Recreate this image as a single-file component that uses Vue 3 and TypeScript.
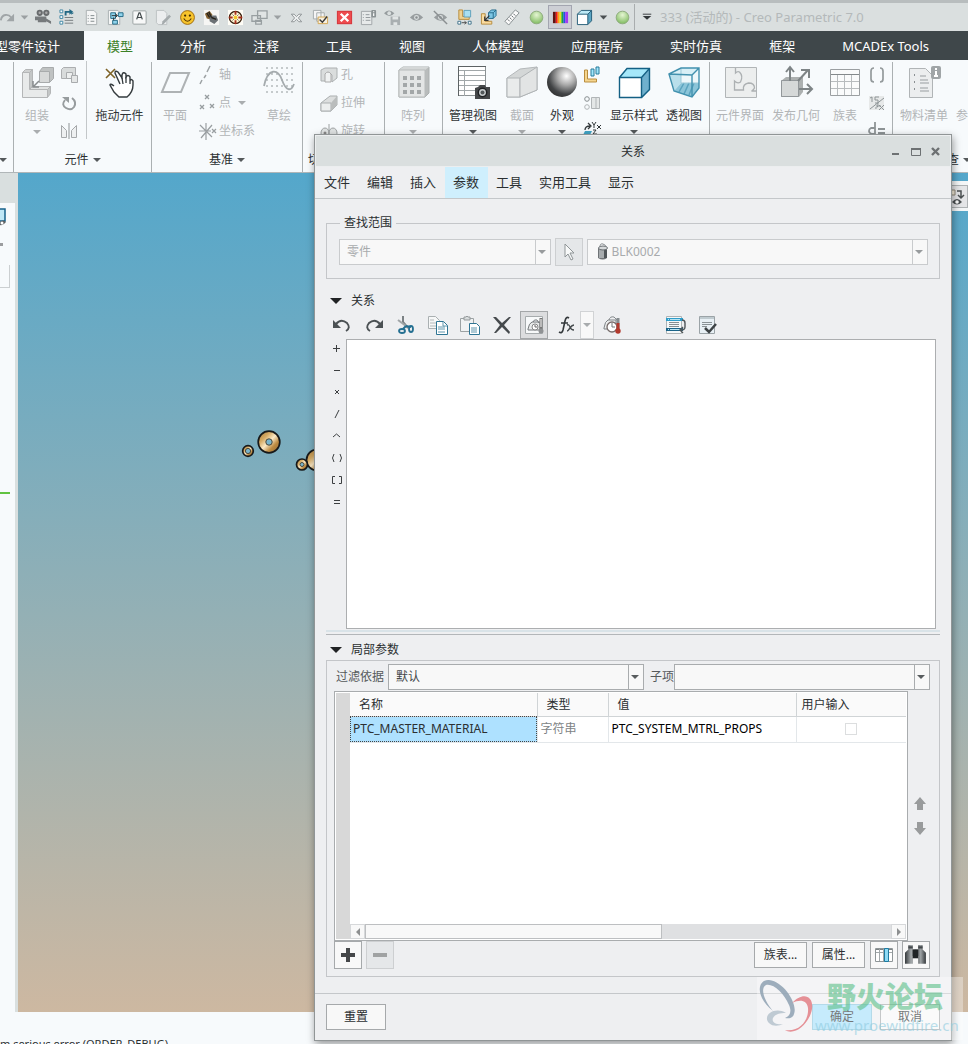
<script setup lang="ts">
import { ref } from 'vue'

interface Quick { icon: string; label: string; kind?: string }
interface Tool { label: string; icon: string; size?: string; off?: boolean; arrow?: boolean }
interface Column { kind: string; tools: Tool[] }
interface Group { id: string; label: string; columns: Column[] }

const quick: Quick[] = [
  { icon: 'redoGrey', label: '重做' },
  { icon: 'down', label: '重做列表', kind: 'drop dim' },
  { icon: 'camera', label: '录像' },
  { icon: 'regen', label: '重新生成' },
  { icon: 'sheet', label: '报告' },
  { icon: 'tree', label: '模型树' },
  { icon: 'letter', label: '注解' },
  { icon: 'sheetPen', label: '编辑' },
  { icon: 'smile', label: '表情' },
  { icon: 'motor', label: '电机' },
  { icon: 'target', label: '目标' },
  { icon: 'windows', label: '窗口' },
  { icon: 'down', label: '窗口列表', kind: 'drop dim' },
  { icon: 'closeGrey', label: '关闭' },
  { icon: 'sheetCheck', label: '检查' },
  { icon: 'redX', label: '拭除' },
  { icon: 'sheetInfo', label: '信息' },
  { icon: 'eyeSave', label: '保存状况' },
  { icon: 'eye', label: '显示' },
  { icon: 'eyeOff', label: '隐藏' },
  { icon: 'assembleA', label: '放置' },
  { icon: 'assembleB', label: '组装' },
  { icon: 'ruler', label: '测量' },
  { icon: 'ball', label: '状况' },
  { icon: 'rainbow', label: '颜色', kind: 'pressed' },
  { icon: 'cubeSmall', label: '显示样式' },
  { icon: 'down', label: '样式列表', kind: 'drop' },
  { icon: 'ball', label: '再生状况' }
]

const tabs = ['分析', '注释', '工具', '视图', '人体模型', '应用程序', '实时仿真', '框架', 'MCADEx Tools']

const groups: Group[] = [
  { id: 'g-edge', label: '', columns: [] },
  {
    id: 'g-part', label: '元件', columns: [
      { kind: 'big w46', tools: [{ label: '组装', icon: 'assemble', off: true, arrow: true }] },
      { kind: 'small w26 ruled', tools: [
        { label: '', icon: 'create', off: true }, { label: '', icon: 'repeat', off: true }, { label: '', icon: 'mirror', off: true }] },
      { kind: 'big w64', tools: [{ label: '拖动元件', icon: 'hand' }] }
    ]
  },
  {
    id: 'g-datum', label: '基准', columns: [
      { kind: 'big w46', tools: [{ label: '平面', icon: 'plane', off: true }] },
      { kind: 'small w58', tools: [
        { label: '轴', icon: 'axis', off: true }, { label: '点', icon: 'points', off: true, arrow: true }, { label: '坐标系', icon: 'csys', off: true }] },
      { kind: 'big w46', tools: [{ label: '草绘', icon: 'sketch', off: true }] }
    ]
  },
  {
    id: 'g-cut', label: '切口和曲面', columns: [
      { kind: 'small w64 inset', tools: [
        { label: '孔', icon: 'hole', off: true }, { label: '拉伸', icon: 'extrude', off: true }, { label: '旋转', icon: 'revolve', off: true }] }
    ]
  },
  { id: 'g-pattern', label: '修饰符', columns: [{ kind: 'big w56', tools: [{ label: '阵列', icon: 'pattern', off: true, arrow: true }] }] },
  {
    id: 'g-display', label: '模型显示', columns: [
      { kind: 'big w60', tools: [{ label: '管理视图', icon: 'viewManager', arrow: true }] },
      { kind: 'big w38', tools: [{ label: '截面', icon: 'section', off: true, arrow: true }] },
      { kind: 'big w42', tools: [{ label: '外观', icon: 'sphere', arrow: true }] },
      { kind: 'small w22', tools: [
        { label: '', icon: 'explode' }, { label: '', icon: 'toggleView', off: true }, { label: '', icon: 'orient' }] },
      { kind: 'big w56', tools: [{ label: '显示样式', icon: 'cube', arrow: true }] },
      { kind: 'big w44', tools: [{ label: '透视图', icon: 'perspective' }] }
    ]
  },
  {
    id: 'g-intent', label: '模型意图', columns: [
      { kind: 'big w60', tools: [{ label: '元件界面', icon: 'puzzle', off: true }] },
      { kind: 'big w52', tools: [{ label: '发布几何', icon: 'publish', off: true }] },
      { kind: 'big w46', tools: [{ label: '族表', icon: 'family', off: true }] },
      { kind: 'small w22', tools: [
        { label: '', icon: 'brackets', off: true }, { label: '', icon: 'switchDim', off: true }, { label: '', icon: 'dEquals', off: true }] }
    ]
  },
  {
    id: 'g-check', label: '调查', columns: [
      { kind: 'big w62', tools: [{ label: '物料清单', icon: 'bom', off: true }] },
      { kind: 'big w62', tools: [{ label: '参考查看器', icon: 'refViewer', off: true }] }
    ]
  }
]

const menus = ['文件', '编辑', '插入', '参数', '工具', '实用工具', '显示']
const activeMenu = ref('参数')

const editTools: Quick[] = [
  { icon: 'undo', label: '撤消' },
  { icon: 'redo', label: '重做' },
  { icon: 'cut', label: '剪切' },
  { icon: 'copy', label: '复制' },
  { icon: 'paste', label: '粘贴' },
  { icon: 'remove', label: '删除' },
  { icon: 'units', label: '单位', kind: 'on' },
  { icon: 'fx', label: '函数', kind: 'joined' },
  { icon: 'down', label: '函数列表', kind: 'split' },
  { icon: 'unitsRed', label: '校验单位' },
  { icon: 'sortRel', label: '排序关系', kind: 'apart' },
  { icon: 'verify', label: '校验关系' }
]

const operators = ['plus', 'minus', 'times', 'slash', 'caret', 'round', 'square', 'equals']
const relations = ref('')
const rows = [{ name: 'PTC_MASTER_MATERIAL', type: '字符串', value: 'PTC_SYSTEM_MTRL_PROPS' }]

const sheet = '<path d="M3.500 1.500h8l3 3v12h-11z" fill="#f4f5f5" stroke="#a9afb1"/>'
const eyeShape = '<path d="M2 9q7-8 14 0q-7 7-14 0z" fill="#989d9f"/><circle cx="9" cy="9" r="2.600" fill="#dadfdf"/><circle cx="9" cy="9" r="1.300" fill="#898e90"/>'
const cube3 = '<path d="M1 11L8 3H32L24 11z" fill="#a5e8fa"/><path d="M24 11L32 3V24L24 32z" fill="#6fb0cd"/><path d="M1 11h23v20H1z" fill="#fff"/><path d="M1.500 11.500h22v20h-22zL9 2.500h22.500v21l-8 8M23.500 11.500l8-9" fill="none" stroke="#146084" stroke-width="1.400"/>'

const art: Record<string, string> = {
  down: '<path d="M5 7h8l-4 4z" fill="currentColor"/>',
  redoGrey: '<path d="M3 12C4 5 11 5 14 9" fill="none" stroke="#a0a5a7" stroke-width="2"/><path d="M17 5v8H9z" fill="#a0a5a7"/>',
  camera: '<circle cx="5" cy="4" r="3.300" fill="#686b6d"/><circle cx="12" cy="4" r="3.300" fill="#686b6d"/><circle cx="5" cy="4" r="1.300" fill="#aaa"/><circle cx="12" cy="4" r="1.300" fill="#aaa"/><path d="M3 8h9v6H3zM0 8h3v4H0zM12 10l5 3v3l-5-3z" fill="#767a7c"/>',
  regen: '<path d="M1 1h3v3H1zM1 7h3v3H1zM1 13h3v3H1z" fill="#fff" stroke="#3c86a4"/><path d="M6 9h9M6 12h9M6 15h9" stroke="#747a7c"/><path d="M7 7V3h5" fill="none" stroke="#236985" stroke-width="2"/><path d="M11 0l4 3-4 3zM13 6V4h3" fill="#236985"/>',
  sheet: sheet + '<path d="M5 7h1M5 10h1M5 13h1M8 7h4M8 10h4M8 13h4" stroke="#81898b"/>',
  tree: '<path d="M1.500 1.500h10l2 2v13h-12z" fill="#f4f5f5" stroke="#a9afb1"/><path d="M4 4h5v6H4zM12 4h5v4h-5zM6 12h5v4H6z" fill="#8fd3ec" stroke="#236985"/><path d="M5 7h6M7 9v3M9 5l2 2-2 2" fill="none" stroke="#333"/>',
  letter: '<rect x="2" y="2" width="14" height="14" rx="1" fill="#f7f8f8" stroke="#9aa1a3"/><path d="M6 11L8.500 4h1L12 11M7 9h4" fill="none" stroke="#424a4c" stroke-width="1.300"/>',
  sheetPen: '<path d="M1.500 1.500h8l3 3v12h-9l-2-2z" fill="#eceeef" stroke="#bcc1c2"/><path d="M8 13l7-7 2 2-7 7-3 2z" fill="#a5abad"/>',
  smile: '<circle cx="9" cy="9" r="7.300" fill="#f7c42c" stroke="#9a6810"/><circle cx="6.500" cy="7" r="1.200" fill="#402b04"/><circle cx="11.500" cy="7" r="1.200" fill="#402b04"/><path d="M5 10q4 6 8 0" fill="none" stroke="#553807" stroke-width="1.200"/>',
  motor: '<path d="M1 1h16v16H1z" fill="#f6f6f4"/><path d="M2 5l5-3 3 4-2 5-4-1z" fill="#836131"/><path d="M7 7l7 0 2 5-4 4-5-3z" fill="#6c7175"/><path d="M4 4l3 5M6 3l3 6M9 9l5 2" stroke="#27231c" stroke-width="1.500"/>',
  target: '<path d="M1 1h16v16H1z" fill="#fffdf6"/><circle cx="9" cy="9" r="6.500" fill="#fff7d5" stroke="#38200e" stroke-width="1.400"/><path d="M9 2v4M9 12v4M2 9h4M12 9h4" stroke="#a72f1c" stroke-width="2"/><circle cx="9" cy="9" r="2" fill="#f0c52c"/><path d="M6 6l1 1M12 6l-1 1M6 12l1-1M12 12l-1-1" stroke="#262626"/>',
  windows: '<path d="M7 2h10v8H7zM1 7h9v6H1zM5 12h6v4H5z" fill="#e0e4e4" stroke="#989fa1" stroke-width="1.400"/>',
  closeGrey: '<path d="M3.500 5.500h3l2.500 2.500 2.500-2.500h3L11 9.500l3.500 4h-3L9 11l-2.500 2.500h-3L7 9.500z" fill="#eef0f0" stroke="#8e9496"/>',
  sheetCheck: '<path d="M1.500 1.500h8v9h-8zM5 4h8v9H5z" fill="#f5f5f5" stroke="#a4aaac"/><path d="M6.500 8.500h10v7h-10z" fill="#f7f0df" stroke="#d5a650"/><path d="M8 11l3 3 5-6" fill="none" stroke="#3b3b3b" stroke-width="1.500"/>',
  redX: '<rect x="1" y="2" width="16" height="14" fill="#ee4b4e"/><path d="M5 5l8 8M13 5l-8 8" stroke="#fff" stroke-width="2.500"/><rect x="1.500" y="2.500" width="15" height="13" fill="none" stroke="#d53a3f"/>',
  sheetInfo: '<path d="M1.500 2.500h11v14h-11z" fill="#e7eaea" stroke="#a0a6a8"/><path d="M3 6h1M3 9h1M3 12h1M6 6h4M6 9h5M6 12h5" stroke="#90979a"/><rect x="12" y="1" width="5" height="8" rx="1" fill="#8c9395"/><path d="M14.500 2.500v1M14.500 4.500v3" stroke="#fff" stroke-width="1.300"/>',
  eyeSave: '<path d="M0 4.500q5-6 11 0q-5 6-11 0z" fill="#969c9e"/><circle cx="5.500" cy="4.500" r="2" fill="#dadfdf"/><path d="M7 8h10v9H7z" fill="#a9afb1"/><path d="M9 8h6v3H9zM10 14h4v3h-4z" fill="#e2e6e6"/>',
  eye: eyeShape,
  eyeOff: eyeShape + '<path d="M2 2l14 14" stroke="#8a8f91" stroke-width="1.500"/>',
  assembleA: '<path d="M3 1v10h11V8H7V1z" fill="#f0d18f" stroke="#b68b3d"/><path d="M8.500 1.500h7v7h-7z" fill="#a9dff1" stroke="#5c9fb9"/><path d="M2 13h3v3H2zM13 13h3v3h-3z" fill="#fff" stroke="#3b7088"/><path d="M6 14.500h5M9 13l2 1.500L9 16" fill="none" stroke="#4a4a4a"/>',
  assembleB: '<path d="M1.500 5v11h11v-3h-7V5z" fill="#f9dba1" stroke="#b68b3d"/><path d="M9 4l3-3h5v6l-3 3H9z" fill="#7dc6e4" stroke="#266b8b"/><path d="M9 4h5v6M14 4l3-3" fill="none" stroke="#266b8b"/><path d="M10 7l-5 5M5 8v4h4" fill="none" stroke="#343434" stroke-width="1.300"/>',
  ruler: '<path d="M1 13L12 1l4 3L5 17z" fill="#fafafa" stroke="#858c8e"/><path d="M6 13l-2-2M8 11L6 9M10 9L8 7M12 7l-2-2" stroke="#60676a"/>',
  ball: '<circle cx="9" cy="9" r="6.700" fill="url(#green)" stroke="#8daa7d"/>',
  rainbow: '<path d="M1 3h3v12H1z" fill="#5f1212"/><path d="M4 3h2v12H4z" fill="#f01818"/><path d="M6 3h2v12H6z" fill="#ff9c12"/><path d="M8 3h2v12H8z" fill="#e9e51a"/><path d="M10 3h2v12h-2z" fill="#19a540"/><path d="M12 3h2v12h-2z" fill="#2258dd"/><path d="M14 3h3v12h-3z" fill="#a23bf0"/>',
  cubeSmall: '<path d="M1.500 5.500h11v11h-11z" fill="#fff"/><path d="M1.500 5.500l4-4h11l-4 4z" fill="#bdeaf6"/><path d="M12.500 5.500l4-4v11l-4 4z" fill="#5ba5c2"/><path d="M1.500 5.500h11v11h-11zl4-4h11v11l-4 4M12.500 5.500l4-4" fill="none" stroke="#235b76"/>',
  assemble: '<path d="M1.500 6.500l3-3h7l-3 3z" fill="#cfd1d1" stroke="#b4b6b7"/><path d="M8.500 6.500l3-3v16l-3 4z" fill="#c3c6c6" stroke="#b4b6b7"/><path d="M8.500 23.500l3-3h18l-3 3z" fill="#dfe1e1" stroke="#b4b6b7"/><path d="M26.500 23.500l3-3v7l-3 4z" fill="#c3c6c6" stroke="#b4b6b7"/><path d="M1.500 6.500h7v17h18v8h-25z" fill="#e8eaea" stroke="#b4b6b7"/><path d="M18.500 5.500l3-4h11v11l-4 4h-10z" fill="#bfc2c2" stroke="#a8abac"/><path d="M18.500 5.500h10v11h-10z" fill="#d7d9d9" stroke="#a8abac"/><path d="M18 15l-6 6M12 15v6h6" fill="none" stroke="#888c8e" stroke-width="1.500"/>',
  create: '<path d="M1.500 3.500l2-2h12v9l-2 2h-12z" fill="#d8dbdb" stroke="#acaeb0"/><path d="M6.500 6.500h6v6h-6z" fill="#eceeee" stroke="#a8abad"/><path d="M11.500 9.500h6v7h-6z" fill="#e4e6e6" stroke="#a8abad"/>',
  repeat: '<path d="M5 6q-4 5 1 8 5 3 8-1 3-5-2-9" fill="none" stroke="#979c9e" stroke-width="2"/><path d="M2 3h7v6z" fill="#979c9e"/>',
  mirror: '<path d="M1.500 3.500l5 5v7h-5zM16.500 3.500l-5 5v7h5z" fill="#eef0f1" stroke="#a5a8aa"/><path d="M9 1v16" stroke="#8f9496"/>',
  hand: '<path d="M3 3l9 9M12 3l-9 9" stroke="#7d6226" stroke-width="1.600"/><path d="M11 20q-4-3-4-1l4 7 5 5h8q6-5 6-12v-4q-2-3-3 0v-4q-2-3-4 0v-3q-3-3-4 1v3l-4-6q-3-2-3 1l5 11" fill="#fff" stroke="#353b3e" stroke-width="1.400"/><path d="M19 12l1 6M23 11v6M27 15v3" stroke="#353b3e" stroke-width="1.300"/>',
  plane: '<path d="M3 26L11 7h19L22 26z" fill="#f7fafc" stroke="#aeb2b4" stroke-width="2"/>',
  axis: '<path d="M12 0L9 6M8 9l-2 3M4 14l-2 4" stroke="#9da2a4" stroke-width="1.500"/>',
  points: '<path d="M7 1l4 4M11 1L7 5M2 11l4 4M6 11l-4 4M12 10l4 4M16 10l-4 4" stroke="#979da0" stroke-width="1.300"/>',
  csys: '<path d="M1 9h12M8 1v17M2 3l12 12M14 3L3 16M14 7l4 4M18 7l-4 4" stroke="#999ea1" stroke-width="1.200"/>',
  sketch: '<path d="M3 2h28M3 8h28M3 14h28M3 20h28M3 26h28" stroke="#c5cacc" stroke-width="2" stroke-dasharray="2 3"/><path d="M1 20C5 1 15 3 19 14s9 12 12 4" fill="none" stroke="#a5abae" stroke-width="1.800"/>',
  hole: '<path d="M1 4l4-2h12v10l-5 4V9q-4-5-6 0v6H1z" fill="#dadddd" stroke="#acb0b1"/><path d="M5 16V8q3-4 6 0v8z" fill="#f0f2f2" stroke="#aaa"/>',
  extrude: '<path d="M1 9l9-7h7v9l-6 6H1z" fill="#dcdede" stroke="#abafb0"/><path d="M1 9h10v8H1z" fill="#eceeee" stroke="#abafb0"/><path d="M11 9l6-7v9l-6 6z" fill="#babdbd"/>',
  revolve: '<ellipse cx="5" cy="11" rx="4" ry="5" fill="#dfe2e2" stroke="#9ca0a1"/><ellipse cx="13" cy="11" rx="4" ry="5" fill="#dfe2e2" stroke="#9ca0a1"/><path d="M9 2v14" stroke="#9ca0a1"/><circle cx="5" cy="11" r="1.500" fill="#888"/>',
  pattern: '<path d="M2 4l4-3h26v26l-4 4H2z" fill="#b9bcbc" stroke="#abb0b0"/><path d="M2 4l4-3h26l-4 3z" fill="#d4d7d7"/><path d="M2 4h26v27H2z" fill="#e3e5e5" stroke="#b8bbbb"/><path d="M6 10h4v4H6zM13 10h4v4h-4zM20 10h4v4h-4zM6 17h4v4H6zM13 17h4v4h-4zM20 17h4v4h-4zM6 24h4v4H6zM13 24h4v4h-4zM20 24h4v4h-4z" fill="#a3a7a8"/>',
  viewManager: '<path d="M1.500.500h27v29h-27z" fill="#fff" stroke="#8c9294"/><path d="M2 4.500h26M2 9.500h26M2 14.500h26M2 19.500h26M2 24.500h26M7.500 5v25" stroke="#a1a7a9"/><path d="M1.500 0v30M1 .500h28" stroke="#5d6264"/><path d="M18 22l3-1 2-2h5l1 2h4v12H18z" fill="#454749"/><circle cx="25.500" cy="26.500" r="4.200" fill="#c8ccce" stroke="#212325" stroke-width="1.500"/><circle cx="25.500" cy="26.500" r="2" fill="#54595b"/>',
  section: '<path d="M1 12L14 3l17-2v23l-17 7H1z" fill="#d4d7d7" stroke="#b4b8ba"/><path d="M1 12h13v19H1z" fill="#e9ebeb" stroke="#b0b4b6"/><path d="M14 12L31 1v23L14 31z" fill="#e2e4e4" stroke="#b0b4b6"/>',
  sphere: '<circle cx="16" cy="16" r="15" fill="url(#sphere)"/>',
  explode: '<path d="M1.500 4v12h12v-3h-9V4z" fill="#f5d58f" stroke="#b98d3e"/><path d="M8 3h3v7H8zM13 1h3v7h-3z" fill="#a1e6fb" stroke="#267a9b"/>',
  toggleView: '<circle cx="4" cy="5" r="2.300" fill="none" stroke="#888e90"/><circle cx="4" cy="13" r="2.300" fill="none" stroke="#b1b5b7"/><path d="M8.500 3.500h8v11h-8zM13 4v10" fill="#e4e7e7" stroke="#b1b5b7"/>',
  orient: '<path d="M2 8q0-4 5-4M5 1l3 3-3 3" fill="none" stroke="#33393b" stroke-width="1.300"/><path d="M9 0l2 3 2-3M11 3v3M14 3l4 4M18 3l-4 4M10 8h3l-3 4h4" fill="none" stroke="#33393b"/><path d="M2 9h7l-2 4H0z" fill="#41a4c5"/>',
  cube: cube3,
  perspective: '<path d="M1 8L13 2h18v15l-7 14-18-6z" fill="#eef7fa"/><path d="M1 8l12-6v15l-7 8z" fill="#b9dfeb"/><path d="M6 25l7-8h18v5l-7 9z" fill="#8cc5d9"/><path d="M11 26l5-9M16 28l5-11M21 29l5-12" stroke="#5ba3be" stroke-width="1.500"/><path d="M1 8l12-6h18l-7 7z" fill="#d8eff6"/><path d="M13 2v15h18" fill="none" stroke="#9cc9d8"/><path d="M1 8l12-6h18v20l-7 9-18-6zM1 8l23 1 7-7M24 9v22" fill="none" stroke="#4291ae" stroke-width="1.400"/>',
  puzzle: '<path d="M1.500 1.500h31v30h-31z" fill="#eceeee" stroke="#b1b5b7"/><path d="M11.500 2v5q2-2 4-1 4 4 1 10-3 2-6-1v9h9q-1-6 5-7 6 0 6 5-1 2-3 3h5" fill="none" stroke="#acb0b2" stroke-width="1.300"/>',
  publish: '<path d="M1 15l5-4h17v15l-4 5H1z" fill="#acb0b0"/><path d="M1.500 14.500h17v16h-17z" fill="#d5d8d8" stroke="#92979a"/><path d="M10 15V2M6 6l4-5 4 5M18 15L28 4M21 4h8v8M19 23h12M27 18l5 5-5 5" fill="none" stroke="#7e8486" stroke-width="2"/>',
  family: '<path d="M1.500 3.500h29v26h-29z" fill="#fafbfb" stroke="#9b9fa1"/><path d="M2 8.500h28" stroke="#84898b"/><path d="M2 15.500h28M2 22.500h28M8.500 9v20M15.500 9v20M22.500 9v20" stroke="#b8bcbe"/>',
  brackets: '<path d="M6 2Q3 2 3 5v8q0 3 3 3M12 2q3 0 3 3v8q0 3-3 3" fill="none" stroke="#949a9c" stroke-width="1.700"/>',
  switchDim: '<path d="M1 2h15v14H1z" fill="#e7e9e9"/><path d="M2 4l2-1v5M11 3H7v3h3v3H7M2 15L16 4M7 14q3 1 3-5M8 12h5M11 11l5 5M16 11l-5 5" fill="none" stroke="#8e9597"/>',
  dEquals: '<path d="M7 0v12M7 6H3q-2 1-2 3t3 3h3" fill="none" stroke="#8e9496" stroke-width="1.800"/><path d="M10 7h7M10 11h7" stroke="#8e9496" stroke-width="2"/>',
  bom: '<path d="M1.500 2.500h16l7 7v22h-23z" fill="#eceeef" stroke="#b0b4b6"/><path d="M6 9h1M6 16h1M6 23h1" stroke="#8a8f92" stroke-width="2"/><path d="M12 10h6M12 14h8M12 17h9M12 22h8M12 25h9" stroke="#989da0"/><rect x="23" y="0" width="10" height="13" rx="2" fill="#a0a5a7"/><path d="M28 2v2M28 5v5M26 10h4" stroke="#fff" stroke-width="2"/>',
  refViewer: '<path d="M3 28l5-6M4 22l4 4M9 28v2" stroke="#8f9597" stroke-width="2"/>',
  undo: '<path d="M3 8q5-6 11-1 4 5-1 8" fill="none" stroke="#4b5154" stroke-width="2"/><path d="M0 4v8h8z" fill="#4b5154"/>',
  redo: '<path d="M15 8Q10 2 4 7q-4 5 1 8" fill="none" stroke="#4b5154" stroke-width="2"/><path d="M18 4v8h-8z" fill="#4b5154"/>',
  cut: '<path d="M6 0v6l5 6" fill="none" stroke="#7b8184" stroke-width="2"/><path d="M1 4l8 6" stroke="#a0a5a7" stroke-width="2"/><path d="M9 10l-3 3M9 10l5 1" stroke="#246f91" stroke-width="2"/><ellipse cx="5" cy="15" rx="3" ry="2" fill="none" stroke="#246f91" stroke-width="1.800"/><ellipse cx="14" cy="13" rx="2" ry="3" fill="none" stroke="#246f91" stroke-width="1.800"/>',
  copy: '<path d="M-.500.500h7l4 4v8h-11z" fill="#f6f7f7" stroke="#aab0b2"/><path d="M1 4h4M1 7h7M1 10h7" stroke="#b4b9ba"/><path d="M7.500 5.500h7l4 4v9h-11z" fill="#fff" stroke="#2f7594"/><path d="M9 11h7M9 13h7M9 16h7M14 6v4h4" fill="none" stroke="#6097ae"/>',
  paste: '<path d="M-.500 2.500h13v13h-13z" fill="#f0f2f3" stroke="#9ca2a4"/><path d="M3 4V1h2l1-1 1 1h2v3z" fill="#d8dcdd" stroke="#94999b"/><path d="M8.500 7.500h7l3 3v8h-10z" fill="#fff" stroke="#2f7594"/><path d="M10 12h6M10 14h6M10 16h6" stroke="#6097ae"/>',
  remove: '<path d="M0 1h3l6 6 7-6h2l-7 8 6 7-1 2-7-7-6 6H1l6-8z" fill="#45494c"/>',
  units: '<path d="M.500 0.500h17v17H.500z" fill="#f7f9fa" stroke="#a6abad"/><path d="M3 13q1-6 4-7h8v8H3z" fill="#e8eaea" stroke="#75797c"/><path d="M8 6q1-3 4-2l2 3" fill="none" stroke="#75797c"/><circle cx="10" cy="11" r="3" fill="#fff" stroke="#888"/><path d="M10 9v2h2" fill="none" stroke="#666"/><path d="M16 2v12" stroke="#777" stroke-width="3"/><path d="M16 3v8" stroke="#fff"/><circle cx="16" cy="15" r="2.500" fill="#8f9294"/>',
  fx: '<path d="M12 2q-3-2-4 3L6 14q-1 4-4 2M4 7h7" fill="none" stroke="#33383b" stroke-width="1.600"/><path d="M10 9q2-1 3 2t4 3M17 9q-2 0-4 3t-3 3" fill="none" stroke="#44494c" stroke-width="1.400"/>',
  unitsRed: '<path d="M1 12Q2 5 5 4h8v9H1z" fill="#eceeee" stroke="#7e8386"/><path d="M6 4q1-4 5-3l3 3" fill="none" stroke="#83888b"/><circle cx="9" cy="11" r="5" fill="#fff" stroke="#776d6c" stroke-width="1.300"/><path d="M9 7v4h3" fill="none" stroke="#70787b"/><path d="M15 2v11" stroke="#858b8e" stroke-width="3"/><path d="M15 7v7" stroke="#b2392d" stroke-width="3"/><circle cx="15" cy="15" r="2.700" fill="#b2392d"/>',
  sortRel: '<path d="M.500.500h15v17H.500z" fill="#f5f8f9" stroke="#aeb4b6"/><path d="M0 2h17v3H0z" fill="#2f9dca"/><path d="M0 12h17v3H0z" fill="#1b6489"/><path d="M3 6.500h10M3 8.500h10M3 10.500h10" stroke="#878e91"/><path d="M2 3.500h1M4 3.500h10M2 13.500h1M4 13.500h10" stroke="#b8e3f1"/><path d="M16 4q3 0 3 3v4q0 3-4 3M17 11l-3 3 3 3" fill="none" stroke="#505659" stroke-width="1.400"/>',
  verify: '<path d="M1.500.500h15v17h-15z" fill="#e8f0f5" stroke="#9ba3a7"/><path d="M2 1h14v2H2z" fill="#c0cbd0"/><path d="M4 6.500h10M4 8.500h10M4 10.500h5" stroke="#899195"/><path d="M7 12l4 4 7-8" fill="none" stroke="#3d4245" stroke-width="2.500"/>',
  pointer: '<path d="M5 1v13l3-3 3 6 2-1-3-6h4z" fill="#f8f9f9" stroke="#8f9597"/>',
  model: '<path d="M3 5h9v10q-4 3-9 0z" fill="#707477"/><path d="M4 5q2-2 7 0l-1 10H4z" fill="#a8acae"/><path d="M9 5h3v10H9z" fill="#515659"/><ellipse cx="8" cy="5" rx="4.500" ry="2" fill="#d6d9da" stroke="#686d70"/><path d="M5 4q0-4 3-3t3 3" fill="none" stroke="#868b8e"/>',
  add: '<path d="M7 2h4v5h5v4h-5v5H7v-5H2V7h5z" fill="#454749"/>',
  subtract: '<path d="M2 7h14v4H2z" fill="#a0a2a3"/>',
  up: '<path d="M10 2l6 7h-3v6H7V9H4z" fill="#999b9c"/>',
  lower: '<path d="M10 15l6-7h-3V2H7v6H4z" fill="#999b9c"/>',
  columns: '<path d="M.500 2.500h17v13H.500z" fill="#fff" stroke="#8f9698"/><path d="M1 3h16v1H1z" fill="#7c8284"/><path d="M1 6.500h16M4.500 3v12M8.500 3v12" stroke="#a2a8aa"/><path d="M9.500 2.500h4v13h-4z" fill="#8fdbf5" stroke="#1e7ba1"/>',
  find: '<path d="M2 0h4v4h5V0h4v4l3 3v10h-7v-7H6v7h-7V7l3-3z" fill="url(#steel)"/><path d="M6 4h5v8H6z" fill="#1f2325"/><path d="M2 1h4v2H2zM11 1h4v2h-4z" fill="#44494c"/>',
  left: '<path d="M11 5v8L7 9z" fill="#8d8f90"/>',
  right: '<path d="M7 5v8l4-4z" fill="#8d8f90"/>',
  plus: '<path d="M8.500 6v7M5 9.500h7" stroke="#3c3f41"/>',
  minus: '<path d="M6 9.500h6" stroke="#3c3f41"/>',
  times: '<path d="M7 7l4 4M11 7l-4 4" stroke="#3c3f41"/>',
  slash: '<path d="M11 5l-4 8" stroke="#3c3f41"/>',
  caret: '<path d="M5 10l3.500-3L12 10" fill="none" stroke="#3c3f41"/>',
  round: '<path d="M6 5q-3 4 0 8M12 5q3 4 0 8" fill="none" stroke="#3c3f41"/>',
  square: '<path d="M7 5.500H4.500v7H7M11 5.500h2.500v7H11" fill="none" stroke="#3c3f41"/>',
  equals: '<path d="M6 7.500h6M6 10.500h6" stroke="#3c3f41"/>',
  refView: '<path d="M0 2h5v5H0z" fill="#f4ecd8" stroke="#918b7c"/><path d="M7 3h4v6M8 7l3 3 3-3" fill="none" stroke="#4b5052" stroke-width="1.500"/><path d="M2 14q5-6 10 0q-5 5-10 0z" fill="#4b5052"/><circle cx="7" cy="14" r="1.800" fill="#fff"/>',
  treeView: '<path d="M0 1h5v12H0" fill="#bfe7f6" stroke="#17618a" stroke-width="1.500"/><path d="M0 14q3-3 6 0q-3 4-6 3z" fill="#5d6163"/><circle cx="2" cy="15" r="1.500" fill="#fff"/>'
}
</script>

<template>
  <div class="app">
    <svg class="defs" aria-hidden="true">
      <defs>
        <radialGradient id="sphere" cx="0.650" cy="0.300" r="0.750">
          <stop offset="0" stop-color="#fff" /><stop offset="0.400" stop-color="#aaa" /><stop offset="0.800" stop-color="#424446" /><stop offset="1" stop-color="#333" />
        </radialGradient>
        <radialGradient id="green" cx="0.500" cy="0.300" r="0.700">
          <stop offset="0" stop-color="#e5f5d3" /><stop offset="1" stop-color="#7fbb5f" />
        </radialGradient>
        <linearGradient id="steel"><stop offset="0" stop-color="#34383b" /><stop offset="0.300" stop-color="#a7acae" /><stop offset="0.500" stop-color="#34383b" /><stop offset="0.750" stop-color="#9ea3a5" /><stop offset="1" stop-color="#34383b" /></linearGradient>
        <linearGradient id="brass" x1="0" y1="0" x2="1" y2="1"><stop offset="0" stop-color="#a87733" /><stop offset="0.300" stop-color="#d5ab65" /><stop offset="0.500" stop-color="#fbe9c6" /><stop offset="0.700" stop-color="#bd8b42" /><stop offset="1" stop-color="#8a622e" /></linearGradient>
      </defs>
    </svg>

    <header class="titlebar">
      <button v-for="(q, i) in quick" :key="i" class="quick" :class="q.kind" :aria-label="q.label">
        <svg viewBox="0 0 18 18" v-html="art[q.icon]"></svg>
      </button>
      <span class="rule"></span>
      <button class="quick more" aria-label="自定义"><svg viewBox="0 0 18 18"><path d="M4 5.500h9" stroke="#33383a" /><path d="M4 7.500h9l-4.500 4z" fill="#33383a" /></svg></button>
      <span class="caption">333 (活动的) - Creo Parametric 7.0</span>
    </header>

    <nav class="tabs">
      <button class="tab first">型零件设计</button>
      <button class="tab current">模型</button>
      <button v-for="t in tabs" :key="t" class="tab">{{ t }}</button>
    </nav>

    <section class="ribbon">
      <div v-for="g in groups" :key="g.id" class="group" :class="g.id">
        <div class="group-body">
          <div v-for="(c, ci) in g.columns" :key="ci" class="column" :class="c.kind">
            <button v-for="t in c.tools" :key="t.icon" class="tool" :class="{ off: t.off }" :aria-label="t.label || t.icon">
              <svg class="tool-icon" :viewBox="c.kind.startsWith('big') ? '0 0 33 33' : '0 0 18 18'" v-html="art[t.icon]"></svg>
              <span v-if="t.label" class="tool-label">{{ t.label }}</span>
              <span v-if="t.arrow" class="arrow"></span>
            </button>
          </div>
        </div>
        <button class="group-label" :aria-label="g.label || '操作'">{{ g.label }}<span class="arrow"></span></button>
      </div>
    </section>

    <main class="workspace">
      <aside class="navigator">
        <div class="nav-head"></div>
        <div class="nav-body">
          <svg class="nav-icon" viewBox="0 0 18 18" v-html="art.treeView"></svg>
          <span class="nav-dash"></span>
          <span class="nav-box"></span>
          <span class="nav-insert"></span>
        </div>
      </aside>
      <div class="canvas">
        <svg class="parts" viewBox="0 0 100 50">
          <g stroke="#17191a" stroke-width="1.700" fill="url(#brass)">
            <circle cx="28" cy="31" r="5.300" /><circle cx="49" cy="22" r="10.800" />
            <circle cx="97" cy="40" r="10.500" /><circle cx="82" cy="44.500" r="5.500" />
          </g>
          <g stroke="#4b4637" fill="#79b5cc">
            <circle cx="28" cy="31" r="2.600" /><circle cx="49" cy="22" r="3.200" /><circle cx="82" cy="44.500" r="2" />
          </g>
        </svg>
        <div class="side-tools"><button aria-label="参考查看"><svg viewBox="0 0 18 18" v-html="art.refView"></svg></button></div>
      </div>
    </main>
    <footer class="status">m serious error (ORDER_DEBUG)</footer>

    <section class="dialog" role="dialog" aria-label="关系">
      <header class="dialog-title">
        <h1>关系</h1>
        <div class="window-buttons">
          <button aria-label="最小化"><svg viewBox="0 0 12 12"><path d="M2 8h7" stroke="#6d7173" stroke-width="2" /></svg></button>
          <button aria-label="最大化"><svg viewBox="0 0 12 12"><path d="M1.500 2.500h9v7h-9z" fill="none" stroke="#6d7173" /><path d="M1 3h10" stroke="#6d7173" stroke-width="2" /></svg></button>
          <button aria-label="关闭"><svg viewBox="0 0 12 12"><path d="M2 2l7 7M9 2l-7 7" stroke="#6d7173" stroke-width="2.400" /></svg></button>
        </div>
      </header>
      <nav class="menu">
        <button v-for="m in menus" :key="m" :class="{ active: m === activeMenu }" @click="activeMenu = m">{{ m }}</button>
      </nav>

      <div class="content">
        <fieldset class="scope">
          <legend>查找范围</legend>
          <div class="combo dim kind"><select aria-label="对象类型" disabled><option>零件</option></select></div>
          <button class="square off" aria-label="选择对象" disabled><svg viewBox="0 0 18 18" v-html="art.pointer"></svg></button>
          <div class="combo dim object">
            <svg class="combo-icon" viewBox="0 0 18 18" v-html="art.model"></svg>
            <select aria-label="对象" disabled><option>BLK0002</option></select>
          </div>
        </fieldset>

        <h2 class="heading relations-heading"><span class="fold"></span>关系</h2>
        <div class="edit-tools">
          <button v-for="t in editTools" :key="t.label" :class="t.kind" :aria-label="t.label">
            <svg viewBox="0 0 18 18" v-html="art[t.icon]"></svg>
          </button>
        </div>
        <div class="editor">
          <div class="operators">
            <button v-for="o in operators" :key="o" :aria-label="o"><svg viewBox="0 0 18 18" v-html="art[o]"></svg></button>
          </div>
          <textarea v-model="relations" aria-label="关系"></textarea>
        </div>
        <div class="splitter"></div>

        <h2 class="heading"><span class="fold"></span>局部参数</h2>
        <div class="params">
          <div class="filters">
            <label for="filter">过滤依据</label>
            <div class="combo"><select id="filter"><option>默认</option></select></div>
            <label for="sub" class="sub">子项</label>
            <div class="combo"><select id="sub"><option></option></select></div>
          </div>
          <div class="table-area">
            <div class="grid">
              <div class="gutter"></div>
              <div class="sheet">
                <table>
                  <colgroup><col class="c-name" /><col class="c-type" /><col class="c-value" /><col class="c-user" /></colgroup>
                  <thead><tr><th>名称</th><th>类型</th><th>值</th><th class="tight">用户输入</th></tr></thead>
                  <tbody>
                    <tr v-for="r in rows" :key="r.name">
                      <td class="selected">{{ r.name }}</td><td class="muted">{{ r.type }}</td><td>{{ r.value }}</td>
                      <td class="check"><input type="checkbox" aria-label="用户输入" /></td>
                    </tr>
                  </tbody>
                </table>
                <div class="scrollbar">
                  <button aria-label="向左滚动"><svg viewBox="0 0 18 18" v-html="art.left"></svg></button>
                  <div class="track"><div class="thumb"></div></div>
                  <button aria-label="向右滚动"><svg viewBox="0 0 18 18" v-html="art.right"></svg></button>
                </div>
              </div>
            </div>
            <div class="movers">
              <button aria-label="上移"><svg viewBox="0 0 18 18" v-html="art.up"></svg></button>
              <button aria-label="下移"><svg viewBox="0 0 18 18" v-html="art.lower"></svg></button>
            </div>
          </div>
          <div class="param-actions">
            <button class="square" aria-label="添加"><svg viewBox="0 0 18 18" v-html="art.add"></svg></button>
            <button class="square off" aria-label="移除" disabled><svg viewBox="0 0 18 18" v-html="art.subtract"></svg></button>
            <span class="fill"></span>
            <button class="text-button">族表...</button>
            <button class="text-button">属性...</button>
            <button class="square" aria-label="列"><svg viewBox="0 0 18 18" v-html="art.columns"></svg></button>
            <button class="square binoculars" aria-label="查找"><svg viewBox="-1 0 20 18" v-html="art.find"></svg></button>
          </div>
        </div>
      </div>
      <footer class="dialog-footer">
        <button class="wide">重置</button>
        <span class="fill"></span>
        <button class="wide primary">确定</button>
        <button class="wide">取消</button>
      </footer>
    </section>

    <div class="watermark">
      <svg viewBox="0 0 62 60" aria-hidden="true">
        <path d="M16 34C-2 20 0 2 12 3c16 2 29 25 25 34-1 4-5 5-9 4 5-2 7-6 4-13C27 16 16 6 9 8 2 12 9 26 16 34z" fill="#8ea1b2" />
        <path d="M35 26c11-12 22-7 20 6-3 16-18 27-27 21 17 2 24-12 23-22-1-8-8-9-16-5z" fill="#e37f86" />
        <path d="M29 36c-12-7-24 3-17 10 4 4 10 3 14 1-5 1-12-1-10-6 2-4 7-5 13-5z" fill="#b6c3cd" />
      </svg>
      <div class="mark-text"><strong>野火论坛</strong><span>www.proewildfire.cn</span></div>
    </div>
  </div>
</template>

<style>
body { margin: 0; background: #f7fafc; overflow: hidden; }
</style>

<style scoped>
* { box-sizing: border-box; }
.app {
  position: relative; display: flex; flex-direction: column; height: 100vh; overflow: hidden;
  font: 12px/18px "Noto Sans", "Noto Sans CJK SC", sans-serif; color: #2b2f31; background: #f7fafc;
}
button, select, textarea { font: inherit; color: inherit; margin: 0; padding: 0; border: 0; border-radius: 0; background: none; }
button { display: flex; align-items: center; justify-content: center; flex: none; white-space: nowrap; }
svg { display: block; flex: none; width: 18px; height: 18px; overflow: visible; }
.defs { position: absolute; width: 0; height: 0; }
.fill { flex: 1; }
.arrow { flex: none; width: 0; height: 0; border: 4px solid transparent; border-top-color: #55595b; border-bottom: 0; }

.titlebar { display: flex; align-items: center; flex: none; height: 31px; border-top: 3px solid #b8bdbe; background: #dadfdf; font-size: 13px; }
.quick { width: 24px; height: 24px; }
.quick:first-child { margin-left: -6px; }
.quick svg { width: 17px; height: 17px; }
.drop { width: 14px; color: #4b5052; }
.drop.dim { width: 13px; color: #9ba0a2; }
.pressed { border: 1px solid #a3a5b0; background: #cdcfd5; }
.rule { width: 1px; height: 26px; background: #a9adae; }
.more { width: 25px; }
.caption { color: #b4b9ba; white-space: nowrap; }

.tabs { display: flex; flex: none; height: 29px; background: #3f474a; color: #fff; font-size: 13px; }
.tab { padding: 0 24px 0 23px; }
.tab.first { width: 84px; justify-content: flex-end; overflow: hidden; }
.tab.current { background: #f7fafc; color: #3c8128; }

.ribbon { display: flex; flex: none; height: 113px; padding-top: 2px; border-bottom: 1px solid #b0b6b8; background: #f7fafc; overflow: hidden; }
.group { display: flex; flex-direction: column; flex: none; height: 110px; border-right: 1px solid #abb0b2; }
.group-body { display: flex; flex: none; height: 86px; }
.group-label { height: 24px; gap: 4px; }
.g-edge { width: 14px; }
.g-edge .group-label { margin-left: -8px; }
.g-part { width: 138px; }
.g-datum { width: 151px; }
.g-cut { width: 82px; }
.g-cut .group-label { justify-content: flex-start; padding-left: 5px; }
.g-pattern { width: 58px; }
.g-display { width: 267px; }
.g-intent { width: 183px; }
.g-check { flex: 1; border: 0; overflow: hidden; }
.g-check .group-label { justify-content: flex-start; padding-left: 42px; }
.column { flex: none; }
.small { margin-top: -1px; }
.small .tool { height: 28px; gap: 3px; }
.small .tool .arrow { margin-left: 4px; }
.tool { color: #303436; }
.tool.off { color: #b2b5b7; }
.tool.off .arrow { border-top-color: #aaadaf; }
.big .tool { flex-direction: column; width: 100%; padding-top: 4px; }
.big .tool-icon { width: 33px; height: 33px; }
.big .tool-label { height: 18px; margin-top: 8px; }
.big .arrow { margin-top: 5px; }
.inset { padding-left: 17px; }
.w22 { width: 23px; } .w26 { width: 27px; } .w38 { width: 38px; } .w42 { width: 42px; } .w44 { width: 44px; }
.w46 { width: 46px; } .w52 { width: 52px; } .w56 { width: 56px; } .w58 { width: 58px; }
.w60 { width: 60px; } .w62 { width: 62px; } .w64 { width: 65px; }
.ruled { border-right: 1px solid #c3c7c9; height: 78px; }

.workspace { display: flex; flex: 1; min-height: 0; }
.navigator { display: flex; flex-direction: column; flex: none; width: 18px; background: #d9dfdf; }
.nav-head { height: 30px; }
.nav-body { display: flex; flex-direction: column; flex: 1; width: 15px; background: #f7fafc; }
.nav-icon { width: 18px; height: 18px; margin-top: 5px; }
.nav-dash { width: 3px; height: 3px; margin-top: 17px; background: #9b9d9f; }
.nav-box { width: 10px; height: 23px; margin-top: 19px; border: solid #cbcfd1; border-width: 0 1px 1px 0; }
.nav-insert { width: 10px; height: 2px; margin-top: 204px; background: #61c341; }
.canvas { position: relative; flex: 1; background: linear-gradient(#54a7cb, #cdb8a1); }
.parts { position: absolute; left: 202px; top: 247px; width: 100px; height: 50px; }
.side-tools { position: absolute; right: 0; top: 8px; width: 20px; height: 30px; background: #f4f6f7; padding: 4px 1px; }
.side-tools button { width: 19px; height: 23px; border: 1px solid #aeb2b4; background: #e4e5e7; }
.status { flex: none; height: 32px; padding-top: 23px; overflow: hidden; font-size: 11px; }

.dialog {
  position: absolute; left: 314px; right: 16px; top: 134px; bottom: 3px; display: flex; flex-direction: column;
  border: 1px solid #909596; background: #eeeff1; box-shadow: 1px 3px 8px rgba(0, 0, 0, 0.4);
}
.dialog-title { position: relative; display: flex; align-items: center; justify-content: center; flex: none; height: 32px; padding-top: 2px; border: 1px solid #eceeef; background: #dadfdf; }
.dialog-title h1 { margin: 0; font-size: 12px; font-weight: 400; }
.window-buttons { position: absolute; right: 8px; display: flex; gap: 8px; }
.window-buttons svg { width: 12px; height: 12px; }
.menu { display: flex; flex: none; height: 32px; padding-left: 1px; border-bottom: 1px solid #c4c7ca; font-size: 13px; }
.menu button { padding: 0 9px 1px 8px; }
.menu .active { background: #cfeffd; }

.content { display: flex; flex-direction: column; flex: 1; min-height: 0; padding: 15px 11px 16px; }
.scope { display: flex; align-items: center; flex: none; height: 65px; margin: 0; padding: 6px 11px 0 12px; border: 1px solid #c4c6c9; }
.scope legend { margin-left: 1px; padding: 0 4px; }
.scope .square { margin: 0 4px; }
.combo { position: relative; flex: 1; height: 26px; border: 1px solid #a9acae; background: #f8f8f8; }
.combo select { display: block; width: 100%; height: 100%; padding: 0 20px 0 7px; appearance: none; opacity: 1; color: #44484a; }
.combo::after { content: ""; position: absolute; top: 10px; right: 4px; border: 4px solid transparent; border-top-color: #585c5e; border-bottom: 0; }
.combo::before { content: ""; position: absolute; top: 0; bottom: 0; right: 14px; width: 1px; background: #a9acae; }
.dim { border-color: #c9cbcd; }
.dim select { color: #a8abad; }
.dim::after { border-top-color: #989b9d; }
.dim::before { background: #c9cbcd; }
.kind { flex: 212; }
.object { flex: 341; }
.object select { padding-left: 23px; }
.combo-icon { position: absolute; left: 7px; top: 3px; pointer-events: none; }
.square { width: 28px; height: 28px; border: 1px solid #a6a9ab; background: #f8f8f8; }
.square.off { border-color: #cdcfd1; background: #e5e7e9; }

.heading { display: flex; align-items: center; flex: none; gap: 9px; height: 22px; margin: 0; padding: 1px 0 0 4px; font-size: 12px; font-weight: 400; }
.relations-heading { margin-top: 10px; }
.fold { border: 6px solid transparent; border-top-color: #202224; border-bottom: 0; }
.edit-tools { display: flex; flex: none; gap: 4px; height: 28px; padding-left: 2px; }
.edit-tools button { width: 28px; height: 28px; }
.edit-tools .on { border: 1px solid #a4a7a9; background: #dcdddf; }
.edit-tools .joined { margin-right: -4px; }
.edit-tools .split { width: 14px; border: 1px solid #d1d3d5; background: #f8f8f8; color: #a8abad; }
.edit-tools .apart { margin-left: 31px; }
.editor { display: flex; flex: 1 1 290px; min-height: 180px; padding-right: 4px; }
.operators { display: flex; flex-direction: column; width: 20px; margin-top: -2px; padding-left: 2px; }
.operators button { width: 18px; height: 22px; }
.editor textarea { flex: 1; height: 100%; border: 1px solid #acaeb0; background: #fff; resize: none; outline: 0; }
.splitter { flex: none; height: 5px; margin: 1px 0 3px; border-top: 2px solid #d9e3e8; border-bottom: 1px solid #b3b6b9; }

.params { display: flex; flex-direction: column; flex: 1 1 317px; min-height: 200px; padding: 3px 9px 7px 7px; border: 1px solid #c4c6c9; }
.filters { display: flex; align-items: center; flex: none; height: 26px; margin-bottom: 1px; color: #55595b; }
.filters label { margin: 0 4px 0 2px; }
.filters .sub { margin: 0 0 0 6px; }
.table-area { display: flex; flex: 1; min-height: 0; }
.grid { display: flex; flex: 1; min-width: 0; padding: 1px; border: 1px solid #a9acae; background: #fff; }
.gutter { flex: none; width: 14px; background: #d8d8d8; }
.sheet { display: flex; flex-direction: column; flex: 1; min-width: 0; }
table { width: 100%; table-layout: fixed; border-collapse: collapse; }
.c-name { width: 187px; } .c-type { width: 71px; } .c-value { width: 188px; }
th { height: 23px; padding: 2px 9px 0; background: #fafafa; border: solid #d0d4d6; border-width: 0 1px 1px 0; text-align: left; font-weight: 400; }
th.tight { padding: 2px 5px 0; }
td { height: 26px; padding: 0 3px; border: solid #e3e7ea; border-width: 0 1px 1px 0; color: #000; white-space: nowrap; }
th:last-child, td:last-child { border-right: 0; }
td.selected { background: #aee1ff; outline: 1px dotted #444; outline-offset: -1px; color: #2b2f31; }
td.muted { color: #808385; }
td.check { text-align: center; }
input[type="checkbox"] { appearance: none; display: block; width: 12px; height: 12px; margin: 0 auto; border: 1px solid #dcdedf; background: #fff; }
.scrollbar { display: flex; flex: none; height: 15px; margin-top: auto; background: #dfe0e2; }
.scrollbar button { width: 15px; border: 1px solid #d6d8da; background: #f8f8f8; }
.track { flex: 1; }
.thumb { width: 56.500%; height: 15px; border: 1px solid #bdbfc1; background: #f8f8f8; }
.movers { display: flex; flex-direction: column; justify-content: center; flex: none; width: 22px; gap: 7px; align-items: center; }
.param-actions { display: flex; align-items: center; flex: none; height: 28px; gap: 4px; }
.text-button { width: 53px; height: 26px; margin-right: 1px; border: 1px solid #a6a9ab; background: #f8f8f8; }
.binoculars svg { width: 22px; height: 20px; }
.dialog-footer { display: flex; flex: none; height: 47px; gap: 8px; padding: 10px 11px; border-top: 1px solid #c4c7ca; }
.wide { width: 60px; height: 26px; border: 1px solid #a6a9ab; background: #f8f8f8; }
.primary { background: #a8e0fa; border-color: #8dc6de; }

.watermark { position: absolute; right: 5px; bottom: 4px; display: flex; width: 206px; height: 63px; background: rgba(255, 255, 255, 0.35); pointer-events: none; }
.watermark svg { width: 62px; height: 60px; opacity: 0.85; }
.mark-text { display: flex; flex-direction: column; flex: 1; margin-left: -4px; opacity: 0.6; }
.mark-text strong { padding: 3px 0 0 12px; font: 900 29px/36px "Liberation Serif", "Noto Sans CJK SC", sans-serif; color: #5bbf88; white-space: nowrap; }
.mark-text span { font-size: 15px; line-height: 18px; color: #8fcce0; white-space: nowrap; }
</style>
